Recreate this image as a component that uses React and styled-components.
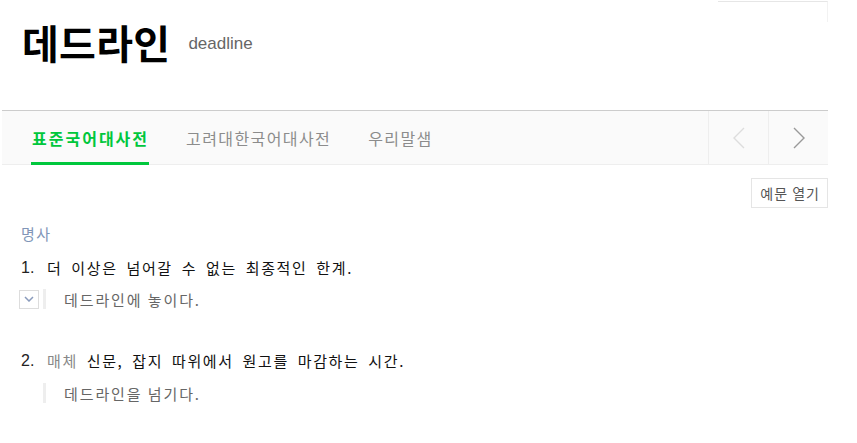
import React from 'react';
import styled, { createGlobalStyle } from 'styled-components';

const GlobalStyle = createGlobalStyle`
  body {
    margin: 0;
    background: #fff;
    font-family: "Noto Sans CJK KR", "Liberation Sans", sans-serif;
  }
`;

const Page = styled.div`
  width: 826px;
  margin-left: 2px;
`;

const Header = styled.header`
  display: flex;
  justify-content: space-between;
  align-items: flex-start;
  height: 110px;
`;

const TitleRow = styled.div`
  display: flex;
  align-items: center;
  padding: 19px 0 0 20px;
`;

const Word = styled.h1`
  margin: 0;
  font-size: 40px;
  line-height: 46px;
  font-weight: 700;
  letter-spacing: 0.3px;
  color: #000;
`;

const Origin = styled.span`
  margin-left: 18px;
  padding-top: 4px;
  font-family: "Liberation Sans", sans-serif;
  font-size: 17px;
  color: #666;
`;

const Corner = styled.div`
  width: 109px;
  height: 20px;
  margin-top: 1px;
  border-top: 1px solid #e6e6e6;
  border-right: 1px solid #f2f2f2;
`;

const TabBar = styled.nav`
  display: flex;
  height: 53px;
  background: #fafafa;
  border-top: 1px solid #ccc;
  border-bottom: 1px solid #eee;
`;

const Tabs = styled.ul`
  display: flex;
  flex: 1;
  gap: 36px;
  margin: 0;
  padding: 0 0 0 29px;
  list-style: none;
`;

const Tab = styled.li`
  display: flex;
  align-items: center;
  padding: 3px 0 0 1px;
  font-size: 16px;
  letter-spacing: ${(p) => (p.$active ? '2px' : '1.4px')};
  font-weight: ${(p) => (p.$active ? 700 : 400)};
  color: ${(p) => (p.$active ? '#00c73c' : '#8c8c8c')};
  border-bottom: 3px solid ${(p) => (p.$active ? '#00c73c' : 'transparent')};
  margin-bottom: -1px;
`;

const NavButton = styled.button`
  display: flex;
  align-items: center;
  justify-content: center;
  width: 60px;
  padding: 0;
  background: transparent;
  border: 0;
  border-left: 1px solid #eee;
  color: ${(p) => (p.$disabled ? '#ddd' : '#999')};
`;

const Toolbar = styled.div`
  display: flex;
  justify-content: flex-end;
  padding-top: 13px;
`;

const ExampleToggle = styled.button`
  height: 30px;
  padding: 0 7px 0 8px;
  background: #fff;
  border: 1px solid #e5e5e5;
  font-family: inherit;
  font-size: 14px;
  letter-spacing: 1px;
  color: #555;
`;

const Entry = styled.section`
  padding-left: 19px;
`;

const PartOfSpeech = styled.div`
  margin-top: 15px;
  font-size: 15px;
  line-height: 22px;
  color: #8196b8;
  letter-spacing: 1.5px;
`;

const Meaning = styled.div`
  display: flex;
  margin-top: ${(p) => p.$gap}px;
  font-size: 15px;
  line-height: 22px;
  color: #111;
  letter-spacing: 1.6px;
  word-spacing: 4px;
`;

const Num = styled.span`
  width: 26px;
  font-family: "Liberation Sans", sans-serif;
  font-size: 16px;
  letter-spacing: 0;
  color: #222;
`;

const Register = styled.span`
  color: #888;
`;

const Example = styled.div`
  display: flex;
  align-items: center;
  margin-top: ${(p) => p.$gap}px;
  height: 22px;
`;

const ExpandBox = styled.span`
  display: flex;
  align-items: center;
  justify-content: center;
  box-sizing: border-box;
  width: 20px;
  height: 19px;
  margin-left: -2px;
  border: 1px solid #ddd;
  background: #fff;
`;

const Quote = styled.div`
  display: flex;
  align-items: center;
  height: 20px;
  margin-left: ${(p) => (p.$indent ? 22 : 4)}px;
  padding-left: 18px;
  border-left: 3px solid #eee;
  font-size: 15px;
  letter-spacing: 1.9px;
  color: #666;
`;

const Chevron = ({ dir }) => (
  <svg width="12" height="22" viewBox="0 0 12 22" fill="none">
    <polyline
      points={dir === 'left' ? '11,1 1,11 11,21' : '1,1 11,11 1,21'}
      stroke="currentColor"
      strokeWidth="1.4"
    />
  </svg>
);

const ExpandIcon = () => (
  <svg width="10" height="6" viewBox="0 0 10 6" fill="none">
    <polyline points="1,1 5,5 9,1" stroke="#8a9bbc" strokeWidth="1.5" />
  </svg>
);

export default function App() {
  return (
    <Page>
      <GlobalStyle />
      <Header>
        <TitleRow>
          <Word>데드라인</Word>
          <Origin>deadline</Origin>
        </TitleRow>
        <Corner />
      </Header>
      <TabBar>
        <Tabs>
          <Tab $active>표준국어대사전</Tab>
          <Tab>고려대한국어대사전</Tab>
          <Tab>우리말샘</Tab>
        </Tabs>
        <NavButton $disabled aria-label="이전">
          <Chevron dir="left" />
        </NavButton>
        <NavButton aria-label="다음">
          <Chevron dir="right" />
        </NavButton>
      </TabBar>
      <Toolbar>
        <ExampleToggle>예문 열기</ExampleToggle>
      </Toolbar>
      <Entry>
        <PartOfSpeech>명사</PartOfSpeech>
        <Meaning $gap={12}>
          <Num>1.</Num>
          <span>더 이상은 넘어갈 수 없는 최종적인 한계.</span>
        </Meaning>
        <Example $gap={9}>
          <ExpandBox>
            <ExpandIcon />
          </ExpandBox>
          <Quote>데드라인에 놓이다.</Quote>
        </Example>
        <Meaning $gap={40}>
          <Num>2.</Num>
          <span>
            <Register>매체</Register> 신문, 잡지 따위에서 원고를 마감하는 시간.
          </span>
        </Meaning>
        <Example $gap={10}>
          <Quote $indent>데드라인을 넘기다.</Quote>
        </Example>
      </Entry>
    </Page>
  );
}
